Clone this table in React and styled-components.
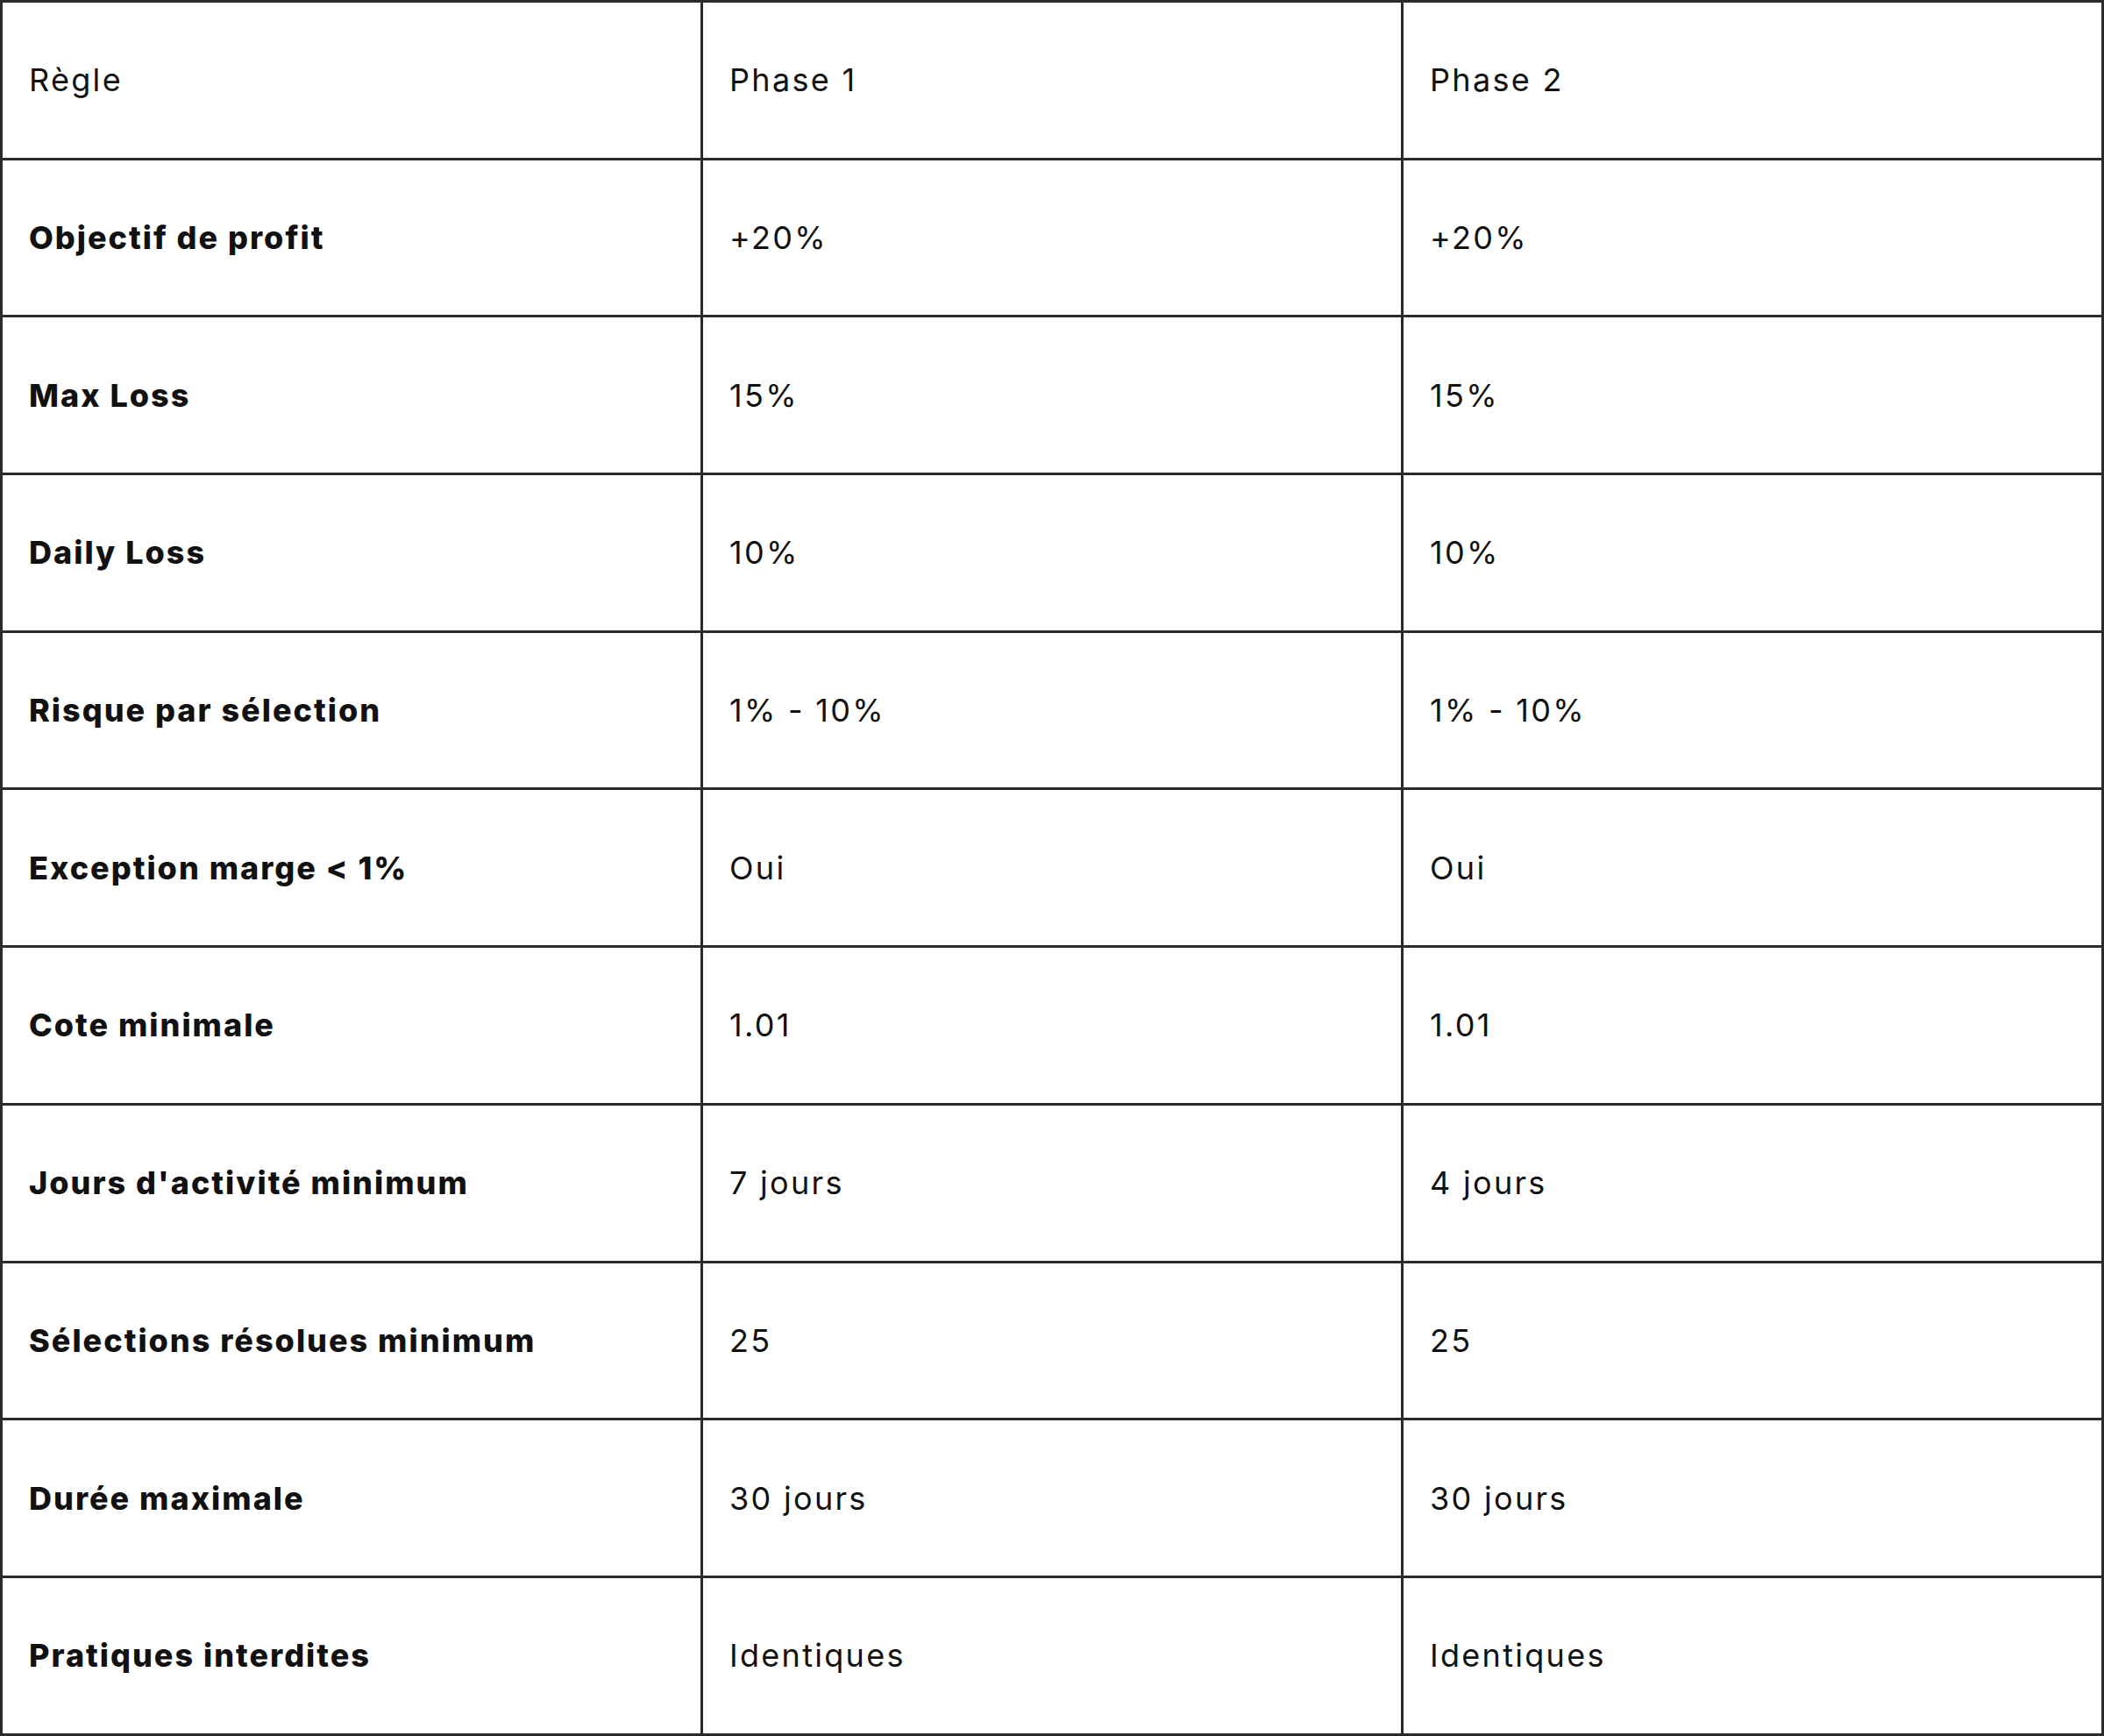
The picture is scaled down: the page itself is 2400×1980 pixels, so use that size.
import React from 'react'
import styled, { createGlobalStyle } from 'styled-components'

const GlobalStyle = createGlobalStyle`
    html, body {
        margin: 0;
        padding: 0;
        background: #ffffff;
    }
`

const rows = [
    ['Objectif de profit', '+20%', '+20%'],
    ['Max Loss', '15%', '15%'],
    ['Daily Loss', '10%', '10%'],
    ['Risque par sélection', '1% - 10%', '1% - 10%'],
    ['Exception marge < 1%', 'Oui', 'Oui'],
    ['Cote minimale', '1.01', '1.01'],
    ["Jours d'activité minimum", '7 jours', '4 jours'],
    ['Sélections résolues minimum', '25', '25'],
    ['Durée maximale', '30 jours', '30 jours'],
    ['Pratiques interdites', 'Identiques', 'Identiques'],
]

export default function App() {
    return (
        <>
            <GlobalStyle />
            <Table>
                <thead>
                    <Row>
                        <HeadCell>Règle</HeadCell>
                        <HeadCell>Phase 1</HeadCell>
                        <HeadCell>Phase 2</HeadCell>
                    </Row>
                </thead>
                <tbody>
                    {rows.map((r, idx) => (
                        <Row key={idx}>
                            <Cell bold>{r[0]}</Cell>
                            <Cell>{r[1]}</Cell>
                            <Cell>{r[2]}</Cell>
                        </Row>
                    ))}
                </tbody>
            </Table>
        </>
    )
}

const Table = styled.table`

    width: 2400px;
    border-collapse: collapse;
    table-layout: fixed;

    font-family: Inter, "Open Sans", sans-serif;
    font-size: 36px;
    color: #111111;

`

const Row = styled.tr`

    height: 179.7px;

`

const HeadCell = styled.th`

    border: 3px solid #2a2a2a;
    padding: 0 30px;
    text-align: left;
    font-weight: 400;
    letter-spacing: 2.3px;
    vertical-align: middle;

`

const Cell = styled.td`

    border: 3px solid #2a2a2a;
    padding: 0 30px;
    vertical-align: middle;
    font-weight: ${props => (props.bold ? 800 : 400)};
    letter-spacing: ${props => (props.bold ? '2px' : '2.3px')};

`
